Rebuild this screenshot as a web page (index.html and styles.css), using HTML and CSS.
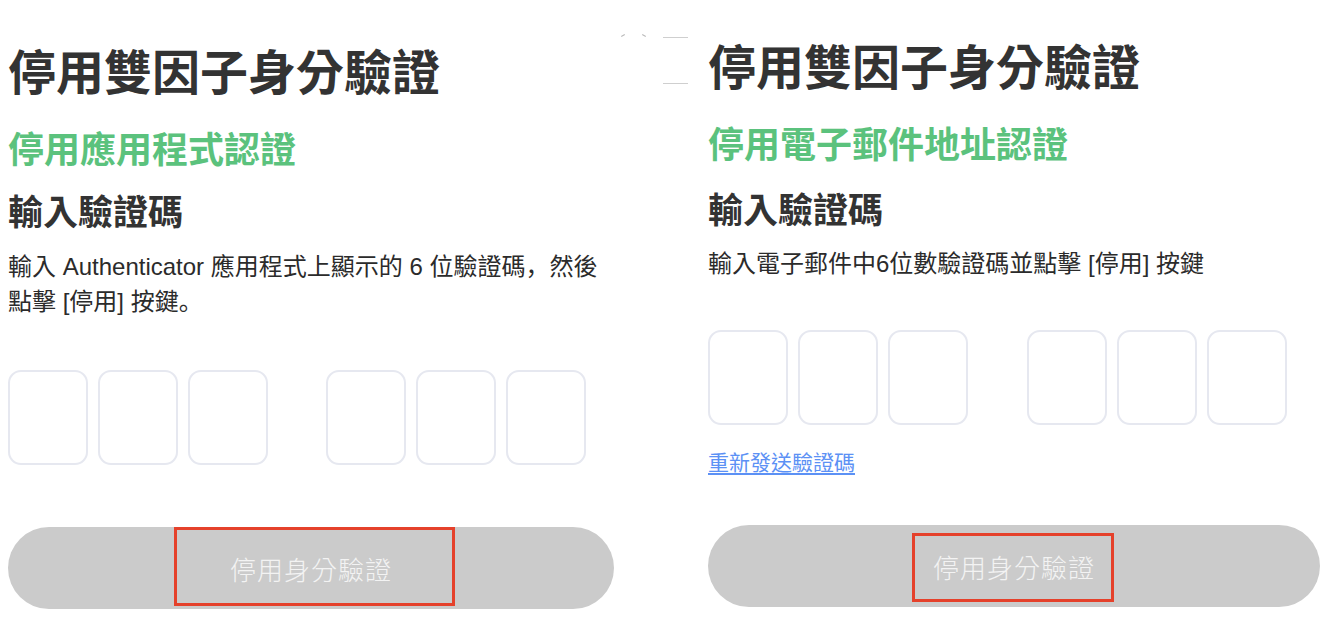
FILE: index.html
```html
<!DOCTYPE html>
<html lang="zh-Hant">
<head>
<meta charset="utf-8">
<title>停用雙因子身分驗證</title>
<link rel="stylesheet" href="styles.css">
</head>
<body>
<div class="page">
  <section class="panel panel-app">
    <h1 class="title">停用雙因子身分驗證</h1>
    <h2 class="subtitle">停用應用程式認證</h2>
    <h3 class="heading">輸入驗證碼</h3>
    <p class="desc">輸入 Authenticator 應用程式上顯示的 6 位驗證碼<span class="punct" lang="zh-Hans">，</span>然後點擊 [停用] 按鍵<span class="punct" lang="zh-Hans">。</span></p>
    <div class="code">
      <div class="group">
        <div class="box"></div><div class="box"></div><div class="box"></div>
      </div>
      <div class="group">
        <div class="box"></div><div class="box"></div><div class="box"></div>
      </div>
    </div>
    <div class="btn">
      <span class="btn-label">停用身分驗證</span>
      <span class="mark mark-left"></span>
    </div>
  </section>

  <div class="artifact">
    <span class="tick t1"></span><span class="tick t2"></span>
    <span class="dash d1"></span><span class="dash d2"></span>
  </div>

  <section class="panel panel-mail">
    <h1 class="title">停用雙因子身分驗證</h1>
    <h2 class="subtitle">停用電子郵件地址認證</h2>
    <h3 class="heading">輸入驗證碼</h3>
    <p class="desc">輸入電子郵件中6位數驗證碼並點擊 [停用] 按鍵</p>
    <div class="code">
      <div class="group">
        <div class="box"></div><div class="box"></div><div class="box"></div>
      </div>
      <div class="group">
        <div class="box"></div><div class="box"></div><div class="box"></div>
      </div>
    </div>
    <a class="resend" href="#">重新發送驗證碼</a>
    <div class="btn">
      <span class="btn-label">停用身分驗證</span>
      <span class="mark mark-right"></span>
    </div>
  </section>
</div>
</body>
</html>
```

FILE: styles.css
```css
* { box-sizing: border-box; }

html, body {
  margin: 0;
  padding: 0;
  background: #ffffff;
}

body {
  font-family: "Liberation Sans", "Noto Sans CJK TC", sans-serif;
  color: #333333;
}

.page {
  position: relative;
  display: flex;
  gap: 94px;
  padding-left: 8px;
  height: 622px;
  overflow: hidden;
}

.panel {
  display: flex;
  flex-direction: column;
  align-items: flex-start;
}

.panel-app { width: 606px; padding-top: 41px; }
.panel-mail { width: 612px; padding-top: 36px; }

.title {
  margin: 0;
  font-family: "Noto Sans CJK TC", sans-serif;
  font-size: 48px;
  line-height: 56px;
  font-weight: 700;
  color: #333333;
}

.subtitle {
  margin: 28px 0 0;
  font-family: "Noto Sans CJK TC", sans-serif;
  font-size: 36px;
  line-height: 44px;
  font-weight: 700;
  color: #5bc27d;
}

.heading {
  margin: 19px 0 0;
  font-family: "Noto Sans CJK TC", sans-serif;
  font-size: 35px;
  line-height: 44px;
  font-weight: 700;
  color: #333333;
}

.panel-mail .heading { margin-top: 22px; }

.desc {
  margin: 17px 0 0;
  font-size: 24px;
  line-height: 35px;
  color: #2b2b2b;
}

.panel-mail .desc { margin-top: 16px; }

.punct {
  font-family: "Noto Sans CJK SC", sans-serif;
  line-height: 0;
}

.code {
  display: flex;
  gap: 58px;
  margin-top: 51px;
}

.panel-mail .code { gap: 59px; margin-top: 49px; }

.group {
  display: flex;
  gap: 10px;
}

.box {
  width: 80px;
  height: 95px;
  border: 2px solid #e6e8f0;
  border-radius: 13px;
  background: #ffffff;
}

.resend {
  margin-top: 22px;
  font-family: "Noto Sans CJK TC", sans-serif;
  font-size: 21px;
  line-height: 28px;
  color: #5c91f5;
  text-decoration: underline;
  text-underline-offset: 3px;
}

.btn {
  position: relative;
  align-self: stretch;
  display: flex;
  align-items: center;
  justify-content: center;
  height: 82px;
  border-radius: 41px;
  background: #cbcbcb;
}

.panel-app .btn { margin-top: 62px; }
.panel-mail .btn { margin-top: 50px; }

.btn-label {
  font-family: "Noto Sans CJK TC", sans-serif;
  font-size: 26px;
  font-weight: 300;
  color: #f3f3f3;
  letter-spacing: 1px;
}

.mark {
  position: absolute;
  border: 3px solid #e5412b;
}

.mark-left { left: 166px; top: 0; width: 281px; height: 79px; }
.mark-right { left: 204px; top: 8px; width: 202px; height: 69px; }

.artifact {
  position: absolute;
  left: 618px;
  top: 30px;
  width: 80px;
  height: 60px;
}

.tick {
  position: absolute;
  width: 4px;
  height: 1px;
  background: #b8b8b8;
  top: 5px;
}
.t1 { left: 3px; transform: rotate(-30deg); }
.t2 { left: 24px; transform: rotate(30deg); }

.dash {
  position: absolute;
  left: 45px;
  width: 25px;
  height: 1px;
  background: #cfcfcf;
}
.d1 { top: 7px; }
.d2 { top: 53px; }
```
